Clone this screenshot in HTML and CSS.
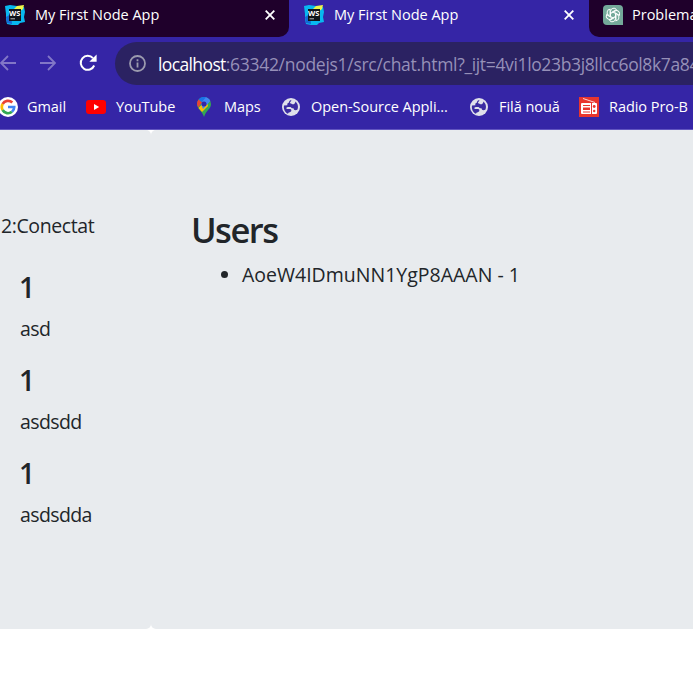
FILE: index.html
```
<!DOCTYPE html>
<html lang="ro">
<head>
<meta charset="utf-8">
<title>My First Node App</title>
<link rel="stylesheet" href="styles.css">
</head>
<body>
<svg class="defs" width="0" height="0">
  <symbol id="ws" viewBox="0 0 20 20">
    <path fill="#08b8f0" d="M0 1 5 0l7 1 7 1 1 5-1 5 1 5-5 1-2 2-6 0-5-1-1-5 0-5z"/>
    <path fill="#eef64a" d="m9 4 3-3 7-1-1 4-4 3z"/>
    <path fill="#1468d5" d="m1 12 5-3 1 10-5-1z"/>
    <path fill="#10151b" d="M4 4h12v12H4z"/>
    <text x="4.100" y="10.800" class="ws-text">WS</text>
    <path fill="#bbb" d="M5.500 13.300H10v1H5.500z"/>
  </symbol>
  <symbol id="globe" viewBox="0 0 18 18">
    <circle cx="9" cy="9" r="9" fill="#dfe0ea"/>
    <path fill="#3b2ca2" d="M9.500 2C8 2.200 7 3 7 4.500 5.500 4.800 5 6 5.400 7.200L2 7.500C1.300 11 3 14.500 6 15.700c.2-1.700 2-1.300 3-2.300.8-.9.300-2.400-1-2.400H4.700c-.7-1.200 0-2 1.300-2h2.500c1 1 1.500 1.500 3 1.300.2 1.700 1.500 2.500 3.800 1.500 1.400-3 .5-6.500-2-8.300.2 2-1.300 3-3 2.800-.8-1-2.300-.5-2.300-1.800 0-1 1.500-1 1.500-2.800z"/>
  </symbol>
</svg>
<header class="browser">
  <div class="tabs">
    <div class="tab tab-first"><svg class="fav"><use href="#ws"/></svg><span>My First Node App</span><svg class="close" viewBox="0 0 10 10"><path d="m.7.7 8.600 8.600m0-8.600-8.600 8.600"/></svg></div>
    <div class="tab tab-active"><svg class="fav"><use href="#ws"/></svg><span>My First Node App</span><svg class="close" viewBox="0 0 10 10"><path d="m.7.7 8.600 8.600m0-8.600-8.600 8.600"/></svg></div>
    <div class="tab tab-last"><svg class="fav" viewBox="0 0 20 20"><path fill="#74a99a" d="M4 0h12q4 0 4 4v16H4q-4 0-4-4V4q0-4 4-4z"/>
      <g fill="none" stroke="#fff" stroke-width="1"><path id="petal" d="M7.500 11.500V6.300a3.300 3.300 0 0 1 6-1.700L8.500 7.400"/><use href="#petal" transform="rotate(60 10 10)"/><use href="#petal" transform="rotate(120 10 10)"/><use href="#petal" transform="rotate(180 10 10)"/><use href="#petal" transform="rotate(240 10 10)"/><use href="#petal" transform="rotate(300 10 10)"/></g></svg><span>Problema</span></div>
  </div>
  <div class="toolbar">
    <svg class="nav back" viewBox="0 0 16 16"><path d="M16 8H1m7-7L1 8l7 7"/></svg>
    <svg class="nav forward" viewBox="0 0 16 16"><path d="M0 8h15M8 1l7 7-7 7"/></svg>
    <svg class="reload" viewBox="0 0 18 18"><path fill="none" stroke="#fff" stroke-width="2" d="M15.200 11.500A7 7 0 1 1 14 4.200"/><path fill="#fff" d="M17.600.5v7.300h-7.300z"/></svg>
    <div class="omnibox">
      <svg class="info" viewBox="0 0 17 17"><circle cx="8.500" cy="8.500" r="7.500"/><path d="M8.500 7.500v5M8.500 4.300v1.900"/></svg>
      <span class="host">localhost</span><span class="path">:63342/nodejs1/src/chat.html?</span><span class="query">_ijt=4vi1lo23b3j8llcc6ol8k7a84</span>
    </div>
  </div>
  <nav class="bookmarks">
    <a class="bm gmail"><svg viewBox="0 0 20 20"><circle cx="10" cy="10" r="10" fill="#fff"/><g fill="none" stroke-width="2.700"><path stroke="#ea4335" d="M4.600 7A6.200 6.200 0 0 1 14.300 5.500"/><path stroke="#fbbc05" d="M4.600 13a6.200 6.200 0 0 1 0-6"/><path stroke="#34a853" d="M14 14.800A6.200 6.200 0 0 1 4.600 13"/><path stroke="#4285f4" d="M10 10h6.200a6.200 6.200 0 0 1-2.200 4.800"/></g></svg><span>Gmail</span></a>
    <a class="bm youtube"><svg viewBox="0 0 20 20"><rect y="3" width="20" height="14" rx="3" fill="#f00"/><path fill="#fff" d="m8 7 5.200 3L8 13z"/></svg><span>YouTube</span></a>
    <a class="bm maps"><svg viewBox="0 0 20 20"><path fill="#34a853" d="M3 7a7 7 0 0 1 14 0c0 5-5 6-7 13-1.500-6-7-8-7-13z"/><path fill="#fbbc04" d="m4.500 11 8-8L14 9l-6 6z"/><path fill="#4285f4" d="M10 0a7 7 0 0 1 6.300 4L9 12 7 7z"/><path fill="#1a73e8" d="M4.500 2.600A7 7 0 0 1 12 .3L7 6z"/><path fill="#ea4335" d="M4.500 2.600 8 5.600 4.200 10.500C2.700 8 2.500 5 4.500 2.600z"/><circle cx="10" cy="7" r="2.500" fill="#3525a3"/></svg><span>Maps</span></a>
    <a class="bm source"><svg class="globe"><use href="#globe"/></svg><span>Open-Source Appli...</span></a>
    <a class="bm newtab"><svg class="globe"><use href="#globe"/></svg><span>Filă nouă</span></a>
    <a class="bm radio"><svg viewBox="0 0 20 20"><path fill="#e8352e" d="M0 0h20v20H0z"/><path stroke="#fff" stroke-width=".8" d="m4 1.500 12 4"/><rect x="2" y="6" width="16" height="11" rx="1" fill="#fff"/><path stroke="#e8352e" d="M4 8.500h7M4 15h7M12.500 6v11"/><path fill="#e8352e" d="M4 10.500h7v2.500H4z"/><circle cx="15.200" cy="9.500" r="1.400" fill="#e8352e"/><circle cx="15.200" cy="14" r="1.200" fill="#e8352e"/></svg><span>Radio Pro-B</span></a>
  </nav>
</header>
<main class="page">
  <section class="panel chat">
    <p class="status">2:Conectat</p>
    <article class="message"><h4>1</h4><p>asd</p></article>
    <article class="message"><h4>1</h4><p>asdsdd</p></article>
    <article class="message"><h4>1</h4><p>asdsdda</p></article>
  </section>
  <section class="panel users">
    <h2>Users</h2>
    <ul><li>AoeW4IDmuNN1YgP8AAAN - 1</li></ul>
  </section>
</main>
</body>
</html>
```
FILE: styles.css
```
* { box-sizing: border-box; }
body { margin: 0; width: 693px; height: 690px; overflow: hidden; background: #fff; color: #212529; font-family: "Open Sans", "Noto Sans", sans-serif; }
h2, h4, p, ul { margin: 0; }
svg { display: block; flex: none; }
.defs { position: absolute; }
.ws-text { font: 700 7.500px "Open Sans", sans-serif; fill: #fff; }

.browser { height: 130px; background: #3525a6; border-bottom: 1px solid #6255c0; color: #fff; overflow: hidden; }
.tabs { display: flex; height: 37px; }
.tab { display: flex; align-items: flex-start; height: 37px; padding-top: 5px; font-size: 14.500px; line-height: 20px; white-space: nowrap; flex: none; }
.fav { width: 20px; height: 20px; }
.tab span { margin-left: 10px; }
.tab-first { width: 289px; padding-left: 5px; background: #1f002b; border-bottom-right-radius: 10px; }
.tab-active { width: 300px; padding-left: 15px; }
.tab-last { width: 104px; padding-left: 14px; background: #1f002b; border-bottom-left-radius: 10px; overflow: hidden; }
.tab-last span { margin-left: 9px; }
.close { width: 10px; height: 10px; margin: 5px 14px 0 auto; fill: none; stroke: #fff; stroke-width: 1.800; }
.tab-active .close { margin-right: 15px; }

.toolbar { display: flex; align-items: center; height: 48px; padding-top: 5px; }
.nav { width: 16px; height: 16px; margin-top: -2px; fill: none; stroke: #8277c7; stroke-width: 1.800; }
.forward { margin-left: 24px; }
.reload { width: 18px; height: 18px; margin: -2px 18px 0 23px; }
.omnibox { display: flex; align-items: center; width: 578px; height: 43px; flex: none; padding-left: 14px; border-radius: 22px 0 0 22px; background: #2b2262; font-size: 17.500px; line-height: 24px; white-space: nowrap; color: #9690b8; overflow: hidden; letter-spacing: -.29px; }
.info { width: 17px; height: 17px; margin-right: 12px; fill: none; stroke: #9b9aae; stroke-width: 1.800; }
.host { color: #fff; letter-spacing: -.62px; }
.query { letter-spacing: -.36px; }

.bookmarks { display: flex; height: 44px; font-size: 14.500px; line-height: 20px; white-space: nowrap; }
.bm { display: flex; align-items: center; flex: none; height: 44px; letter-spacing: -.05px; }
.bm svg { width: 20px; height: 20px; }
.bm .globe { width: 18px; height: 18px; }
.bm span { margin-left: 10px; }
.gmail { width: 88px; margin-left: -2px; }
.gmail span { margin-left: 9px; }
.youtube { width: 108px; }
.maps { width: 88px; }
.source { width: 188px; }
.newtab { width: 109px; }
.source span, .newtab span { margin-left: 11px; }

.page { display: flex; height: 499px; font-size: 19.500px; line-height: 30px; font-weight: 400; overflow: hidden; }
.panel { background: #e8ebee; border-radius: 5px; }
.chat { width: 156px; margin-left: -5px; padding: 81px 0 0 6px; flex: none; }
.status { margin-bottom: 29px; letter-spacing: -.4px; }
.message { height: 93px; padding-left: 19px; }
h4 { font-size: 28px; line-height: 34px; font-weight: 600; margin-left: -1px; }
.message p { margin-top: 10px; letter-spacing: -.6px; }
.users { width: 542px; flex: none; padding: 79px 0 0 40px; border-radius: 5px 0 0 5px; }
h2 { font-size: 34.500px; line-height: 42px; font-weight: 600; letter-spacing: -1.500px; }
ul { padding-left: 51px; margin-top: 9px; }
```
